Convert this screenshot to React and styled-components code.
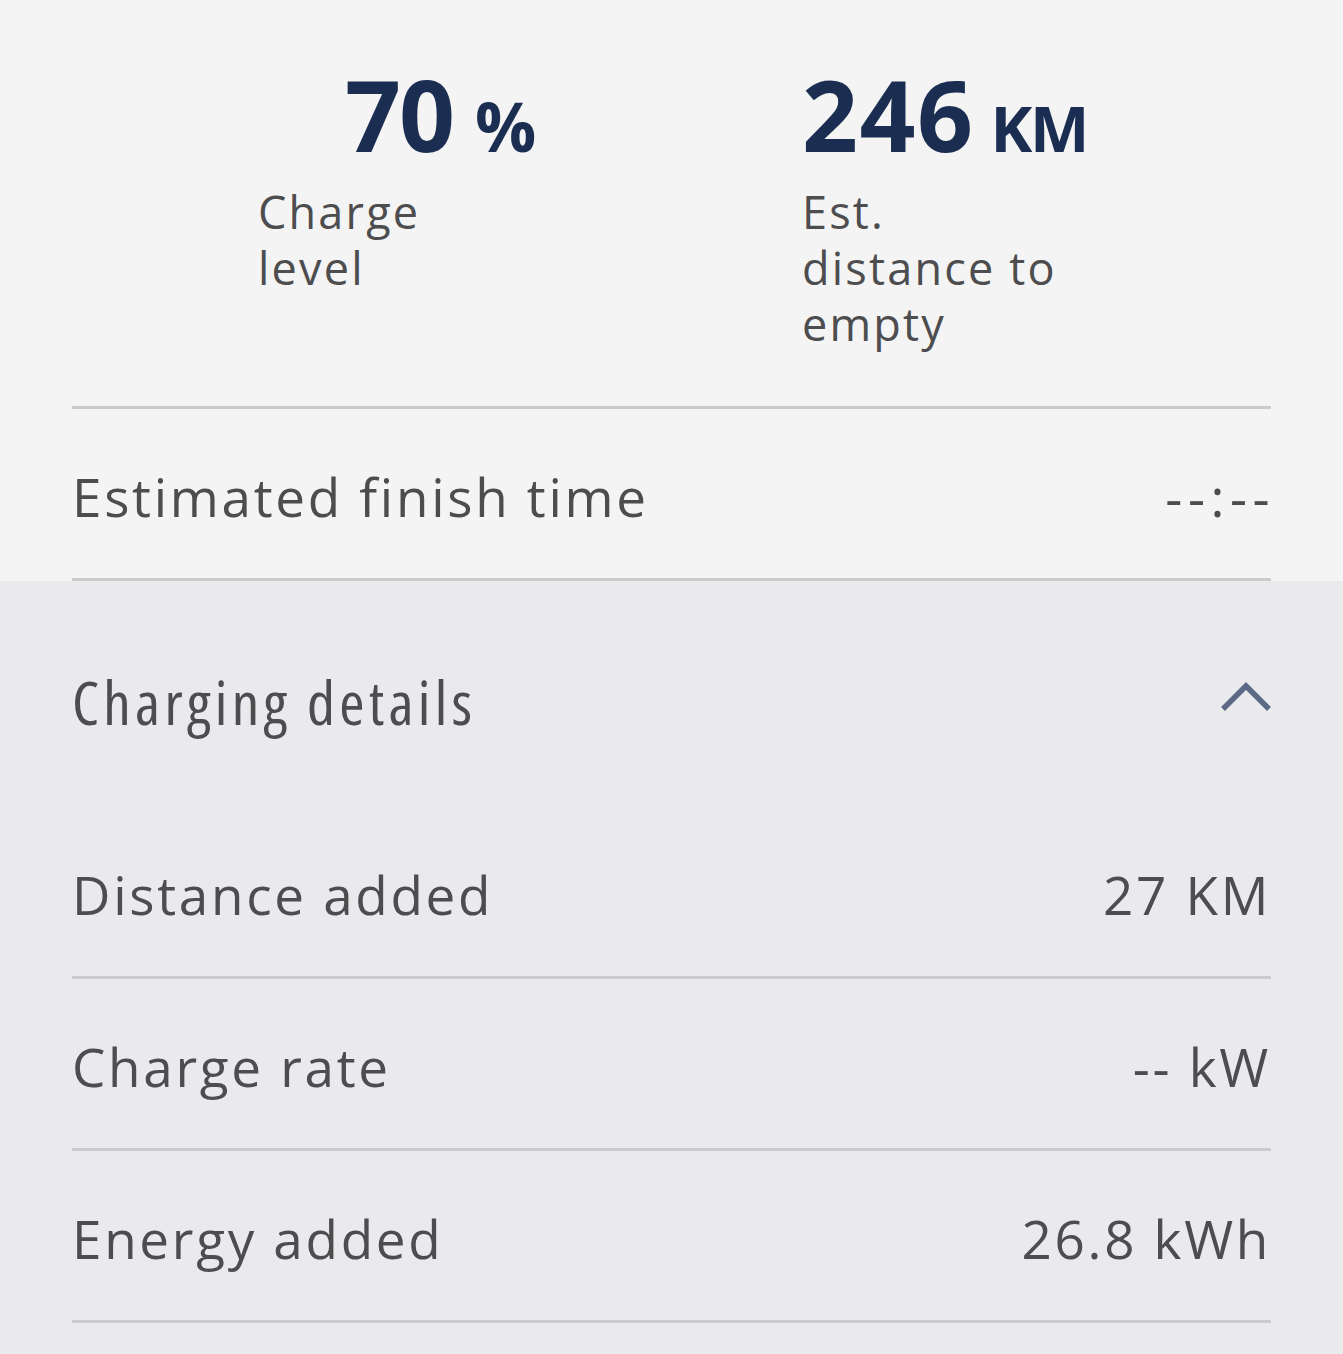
import React from 'react';
import styled, { createGlobalStyle } from 'styled-components';

const GlobalStyle = createGlobalStyle`
  html, body {
    margin: 0;
    padding: 0;
    background: #eaeaec;
  }
  body {
    font-family: "Open Sans", "Noto Sans", sans-serif;
    -webkit-font-smoothing: antialiased;
  }
`;

const navy = '#1b2d50';
const ink = '#4d4d4f';
const rule = '#cbcbcd';

const Page = styled.div`
  width: 1343px;
  min-height: 1354px;
  background: #eaeaec;
`;

const Summary = styled.section`
  background: #f4f4f4;
  padding: 0 72px;
`;

const Stats = styled.div`
  display: flex;
  padding: 64px 0 54px 186px;
  border-bottom: 3px solid ${rule};
`;

const Stat = styled.div`
  width: ${p => p.width}px;
  display: flex;
  flex-direction: column;
`;

const Figure = styled.div`
  display: flex;
  align-items: baseline;
  gap: ${p => p.gap}px;
  padding-left: ${p => p.indent || 0}px;
  color: ${navy};
  font-family: "Open Sans", sans-serif;
  font-weight: 700;
`;

const Big = styled.span`
  font-size: 98px;
  line-height: 100px;
  letter-spacing: ${p => p.spacing}px;
`;

const Unit = styled.span`
  font-size: ${p => p.size}px;
  line-height: 1;
  letter-spacing: ${p => p.spacing || 0}px;
`;

const StatLabel = styled.div`
  margin-top: 20px;
  max-width: ${p => p.max}px;
  color: ${ink};
  font-size: 45px;
  line-height: 56px;
  letter-spacing: 2.2px;
`;

const Row = styled.div`
  display: flex;
  align-items: center;
  justify-content: space-between;
  height: 172px;
  padding-top: 5px;
  box-sizing: border-box;
  border-bottom: 3px solid ${rule};
  color: ${ink};
  font-size: 53px;
  letter-spacing: 2.7px;
`;

const Value = styled.span`
  text-align: right;
  letter-spacing: ${p => (p.wide ? '5.5px' : 'inherit')};
  margin-right: ${p => (p.wide ? '-4px' : '0')};
`;

const Details = styled.section`
  background: #eaeaec;
  padding: 0 72px;
  border-top-right-radius: 10px;
`;

const Header = styled.div`
  display: flex;
  align-items: center;
  justify-content: space-between;
  height: 226px;
  padding-top: 14px;
  box-sizing: border-box;
`;

const Title = styled.h2`
  margin: 0;
  font-family: "Open Sans", sans-serif;
  font-stretch: 75%;
  font-weight: 400;
  font-size: 61px;
  letter-spacing: 4.3px;
  color: ${ink};
`;

const Chevron = styled.svg`
  width: 52px;
  height: 32px;
  margin-right: -1px;
  margin-top: -6px;
`;

export default function App() {
  return (
    <Page>
      <GlobalStyle />
      <Summary>
        <Stats>
          <Stat width={544}>
            <Figure indent={87} gap={22}>
              <Big spacing={-2}>70</Big>
              <Unit size={68}>%</Unit>
            </Figure>
            <StatLabel max={200}>Charge level</StatLabel>
          </Stat>
          <Stat width={400}>
            <Figure gap={16}>
              <Big spacing={1.5}>246</Big>
              <Unit size={63} spacing={-2.5}>KM</Unit>
            </Figure>
            <StatLabel max={275}>Est. distance to empty</StatLabel>
          </Stat>
        </Stats>
        <Row>
          <span>Estimated finish time</span>
          <Value wide>--:--</Value>
        </Row>
      </Summary>
      <Details>
        <Header>
          <Title>Charging details</Title>
          <Chevron viewBox="0 0 52 32" fill="none">
            <path d="M3 27 L26 4 L49 27" stroke="#5b6886" strokeWidth="5.5" />
          </Chevron>
        </Header>
        <Row>
          <span>Distance added</span>
          <Value>27 KM</Value>
        </Row>
        <Row>
          <span>Charge rate</span>
          <Value>-- kW</Value>
        </Row>
        <Row>
          <span>Energy added</span>
          <Value>26.8 kWh</Value>
        </Row>
      </Details>
    </Page>
  );
}
